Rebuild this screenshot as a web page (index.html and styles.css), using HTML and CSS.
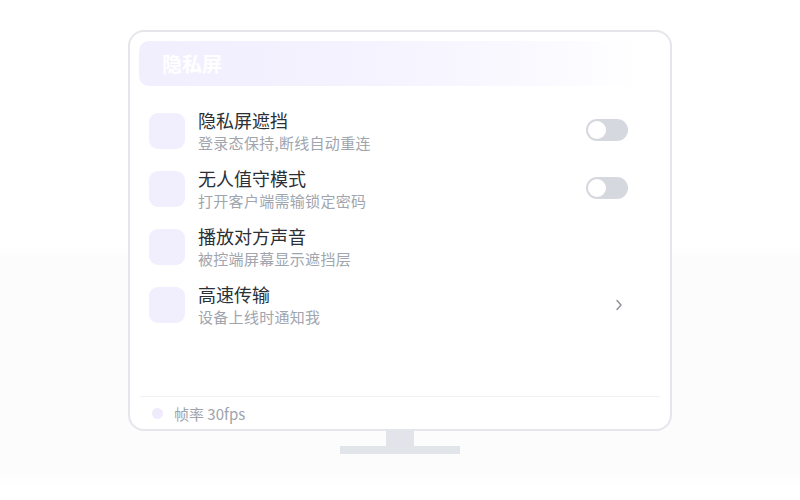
FILE: index.html
```html
<!DOCTYPE html>
<html lang="zh">
<head>
<meta charset="utf-8">
<link rel="stylesheet" href="styles.css">
</head>
<body>
<div class="stage">
  <div class="monitor">
    <div class="header">隐私屏</div>
    <div class="list">
      <div class="row">
        <div class="icon"></div>
        <div class="text">
          <div class="title">隐私屏遮挡</div>
          <div class="sub">登录态保持,断线自动重连</div>
        </div>
        <div class="trail"><span class="toggle"><span class="knob"></span></span></div>
      </div>
      <div class="row">
        <div class="icon"></div>
        <div class="text">
          <div class="title">无人值守模式</div>
          <div class="sub">打开客户端需输锁定密码</div>
        </div>
        <div class="trail"><span class="toggle"><span class="knob"></span></span></div>
      </div>
      <div class="row">
        <div class="icon"></div>
        <div class="text">
          <div class="title">播放对方声音</div>
          <div class="sub">被控端屏幕显示遮挡层</div>
        </div>
        <div class="trail"></div>
      </div>
      <div class="row">
        <div class="icon"></div>
        <div class="text">
          <div class="title">高速传输</div>
          <div class="sub">设备上线时通知我</div>
        </div>
        <div class="trail chev">
          <svg width="8" height="12" viewBox="0 0 8 12"><polyline points="2,1.5 6,6 2,10.5" fill="none" stroke="#8a8f99" stroke-width="1.4" stroke-linecap="round" stroke-linejoin="round"/></svg>
        </div>
      </div>
    </div>
    <div class="footer">
      <span class="dot"></span>
      <span class="fps">帧率 30fps</span>
    </div>
  </div>
  <div class="neck"></div>
  <div class="base"></div>
</div>
</body>
</html>
```
FILE: styles.css
```css
html, body {
  margin: 0;
  padding: 0;
}
body {
  width: 800px;
  height: 500px;
  font-family: "Noto Sans CJK SC", "Noto Sans", sans-serif;
  background: linear-gradient(to bottom, #ffffff 0px, #ffffff 245px, #fcfcfc 260px, #fcfcfc 470px, #ffffff 490px);
  overflow: hidden;
}
.stage {
  display: flex;
  flex-direction: column;
  align-items: center;
  padding-top: 30px;
}
.monitor {
  width: 544px;
  height: 401px;
  box-sizing: border-box;
  border: 2px solid #e4e6eb;
  border-radius: 16px;
  background: #ffffff;
  padding: 9px 9px 0 9px;
  display: flex;
  flex-direction: column;
}
.header {
  height: 45px;
  border-radius: 10px;
  background: linear-gradient(to right, #f1eefe 0%, #f5f3ff 45%, #fbfaff 80%, #ffffff 96%);
  color: #ffffff;
  font-size: 20px;
  font-weight: 700;
  line-height: 45px;
  padding-left: 23px;
}
.list {
  flex: 1;
  padding: 16px 33px 0 10px;
}
.row {
  height: 58px;
  display: flex;
  align-items: center;
}
.icon {
  width: 36px;
  height: 36px;
  border-radius: 9px;
  background: #f1eefe;
  flex: none;
}
.text {
  flex: 1;
  margin-left: 13px;
  margin-top: 0;
}
.title {
  font-size: 18px;
  line-height: 22px;
  color: #2b2f36;
}
.sub {
  font-size: 15px;
  line-height: 20px;
  color: #a0a5ae;
  margin-top: 2px;
  letter-spacing: 0.3px;
}
.trail {
  width: 42px;
  display: flex;
  justify-content: flex-end;
  align-items: center;
}
.chev {
  padding-right: 5px;
  box-sizing: border-box;
}
.toggle {
  position: relative;
  width: 42px;
  height: 22px;
  border-radius: 11px;
  background: #d5d8de;
  margin-top: -3px;
}
.knob {
  position: absolute;
  left: 2px;
  top: 2px;
  width: 18px;
  height: 18px;
  border-radius: 50%;
  background: #ffffff;
}
.footer {
  height: 32px;
  border-top: 1px solid #eff0f3;
  margin: 0 1px;
  display: flex;
  align-items: center;
  padding-left: 12px;
}
.dot {
  width: 11px;
  height: 11px;
  border-radius: 50%;
  background: #efebfd;
}
.fps {
  margin-left: 11px;
  font-size: 15px;
  color: #9ea3ac;
}
.neck {
  width: 28px;
  height: 15px;
  background: #e1e4e8;
}
.base {
  width: 120px;
  height: 8px;
  background: #e1e4e8;
}
```
